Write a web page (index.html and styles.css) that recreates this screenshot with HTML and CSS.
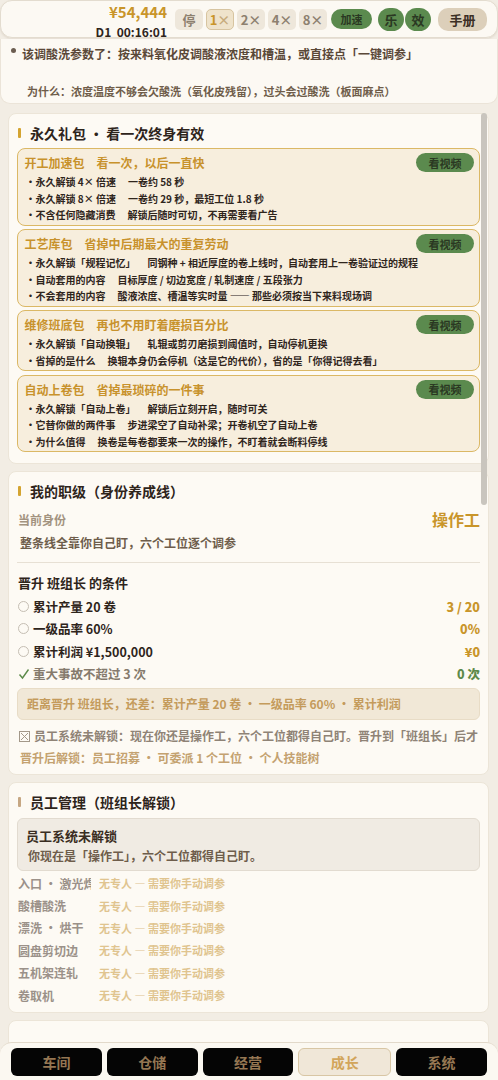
FILE: index.html
```html
<!DOCTYPE html>
<html lang="zh-CN">
<head>
    <meta charset="UTF-8">
    <meta name="viewport" content="width=device-width, initial-scale=1.0">
    <title>冷轧车间 - 成长</title>
    <link rel="stylesheet" href="styles.css">
</head>
<body>
    <!-- Top bar -->
    <header class="topbar">
        <div class="wallet">
            <div class="money">¥54,444</div>
            <div class="clock">D1&nbsp; 00:16:01</div>
        </div>
        <div class="speeds">
            <button class="spd">停</button>
            <button class="spd active"><span class="num">1</span>×</button>
            <button class="spd">2×</button>
            <button class="spd">4×</button>
            <button class="spd">8×</button>
        </div>
        <button class="boost">加速</button>
        <div class="toggles">
            <button class="round">乐</button>
            <button class="round">效</button>
        </div>
        <button class="manual">手册</button>
    </header>

    <!-- Hint -->
    <section class="hint">
        <p class="hint-main"><i class="dot"></i>该调酸洗参数了：按来料氧化皮调酸液浓度和槽温，或直接点「一键调参」</p>
        <p class="hint-why">为什么：浓度温度不够会欠酸洗（氧化皮残留），过头会过酸洗（板面麻点）</p>
    </section>

    <!-- Packs -->
    <section class="card packs">
        <h3 class="card-title">永久礼包 · 看一次终身有效</h3>

        <div class="pack">
            <div class="pack-head">
                <div class="pack-name">开工加速包<span>看一次，以后一直快</span></div>
                <button class="watch">看视频</button>
            </div>
            <ul>
                <li>永久解锁 4× 倍速<em>一卷约 58 秒</em></li>
                <li>永久解锁 8× 倍速<em>一卷约 29 秒，最短工位 1.8 秒</em></li>
                <li>不含任何隐藏消费<em>解锁后随时可切，不再需要看广告</em></li>
            </ul>
        </div>

        <div class="pack">
            <div class="pack-head">
                <div class="pack-name">工艺库包<span>省掉中后期最大的重复劳动</span></div>
                <button class="watch">看视频</button>
            </div>
            <ul>
                <li>永久解锁「规程记忆」<em>同钢种 + 相近厚度的卷上线时，自动套用上一卷验证过的规程</em></li>
                <li>自动套用的内容<em>目标厚度 / 切边宽度 / 轧制速度 / 五段张力</em></li>
                <li>不会套用的内容<em>酸液浓度、槽温等实时量 —— 那些必须按当下来料现场调</em></li>
            </ul>
        </div>

        <div class="pack">
            <div class="pack-head">
                <div class="pack-name">维修班底包<span>再也不用盯着磨损百分比</span></div>
                <button class="watch">看视频</button>
            </div>
            <ul>
                <li>永久解锁「自动换辊」<em>轧辊或剪刃磨损到阈值时，自动停机更换</em></li>
                <li>省掉的是什么<em>换辊本身仍会停机（这是它的代价），省的是「你得记得去看」</em></li>
            </ul>
        </div>

        <div class="pack">
            <div class="pack-head">
                <div class="pack-name">自动上卷包<span>省掉最琐碎的一件事</span></div>
                <button class="watch">看视频</button>
            </div>
            <ul>
                <li>永久解锁「自动上卷」<em>解锁后立刻开启，随时可关</em></li>
                <li>它替你做的两件事<em>步进梁空了自动补梁；开卷机空了自动上卷</em></li>
                <li>为什么值得<em>换卷是每卷都要来一次的操作，不盯着就会断料停线</em></li>
            </ul>
        </div>
    </section>

    <!-- Rank -->
    <section class="card rank">
        <h3 class="card-title">我的职级（身份养成线）</h3>
        <div class="rank-now">
            <span class="label">当前身份</span>
            <span class="rank-name">操作工</span>
        </div>
        <p class="rank-desc">整条线全靠你自己盯，六个工位逐个调参</p>
        <div class="divider"></div>
        <h4 class="cond-title">晋升 班组长 的条件</h4>
        <ul class="conds">
            <li><i class="ring"></i><span>累计产量 20 卷</span><b class="cond-val">3 / 20</b></li>
            <li><i class="ring"></i><span>一级品率 60%</span><b class="cond-val">0%</b></li>
            <li><i class="ring"></i><span>累计利润 ¥1,500,000</span><b class="cond-val">¥0</b></li>
            <li class="done">
                <svg class="tick" viewBox="0 0 12 12" width="12" height="12"><polyline points="1.5,6.5 4.5,10 10.5,1.5" fill="none" stroke="#5d8a4a" stroke-width="1.4"/></svg>
                <span>重大事故不超过 3 次</span><b class="cond-val">0 次</b>
            </li>
        </ul>
        <div class="gap-box">距离晋升 班组长，还差：累计产量 20 卷 · 一级品率 60% · 累计利润</div>
        <p class="locked">
            <svg class="xbox" viewBox="0 0 11 11" width="11" height="11"><rect x="0.5" y="0.5" width="10" height="10" fill="none" stroke="#a39889"/><path d="M2 2 L9 9 M9 2 L2 9" stroke="#a39889"/></svg>员工系统未解锁：现在你还是操作工，六个工位都得自己盯。晋升到「班组长」后才
        </p>
        <p class="unlocks">晋升后解锁：员工招募 · 可委派 1 个工位 · 个人技能树</p>
    </section>

    <!-- Staff -->
    <section class="card staff">
        <h3 class="card-title muted">员工管理（班组长解锁）</h3>
        <div class="staff-box">
            <p class="staff-head">员工系统未解锁</p>
            <p class="staff-sub">你现在是「操作工」，六个工位都得自己盯。</p>
        </div>
        <ul class="stations">
            <li><span class="st-name">入口 · 激光焊</span><span class="st-val">无专人 — 需要你手动调参</span></li>
            <li><span class="st-name">酸槽酸洗</span><span class="st-val">无专人 — 需要你手动调参</span></li>
            <li><span class="st-name">漂洗 · 烘干</span><span class="st-val">无专人 — 需要你手动调参</span></li>
            <li><span class="st-name">圆盘剪切边</span><span class="st-val">无专人 — 需要你手动调参</span></li>
            <li><span class="st-name">五机架连轧</span><span class="st-val">无专人 — 需要你手动调参</span></li>
            <li><span class="st-name">卷取机</span><span class="st-val">无专人 — 需要你手动调参</span></li>
        </ul>
    </section>

    <section class="card next"></section>

    <div class="scroll-thumb"></div>

    <!-- Bottom nav -->
    <nav class="tabs">
        <button class="tab">车间</button>
        <button class="tab">仓储</button>
        <button class="tab">经营</button>
        <button class="tab active">成长</button>
        <button class="tab">系统</button>
    </nav>
</body>
</html>
```

FILE: styles.css
```css
* {
    box-sizing: border-box;
}
html, body {
    margin: 0;
    height: 100%;
    overflow: hidden;
}
body {
    background-color: #f2ede4;
    font-family: "Noto Sans CJK SC", "Noto Sans", sans-serif;
    font-weight: 700;
    color: #3a2d22;
}
button {
    font-family: inherit;
    font-weight: 700;
    border: 0;
    padding: 0;
    cursor: pointer;
}
p, h3, h4, ul {
    margin: 0;
    padding: 0;
}
ul {
    list-style: none;
}

/* Top bar */
.topbar {
    height: 38px;
    display: flex;
    align-items: center;
    justify-content: flex-end;
    padding-right: 10px;
    background: #fcf9f3;
    border: 1px solid #e3dccf;
    border-radius: 12px;
    box-shadow: 0 1px 2px rgba(120, 100, 70, 0.12);
}
.wallet {
    align-self: flex-start;
    text-align: right;
    margin-right: 8px;
    padding-top: 2px;
}
.money {
    font-size: 15px;
    line-height: 18px;
    color: #c9952a;
}
.clock {
    margin-top: 3px;
    font-size: 12px;
    line-height: 16px;
    color: #2e241b;
}
.speeds {
    display: flex;
    gap: 3px;
}
.spd {
    width: 28px;
    height: 21px;
    border-radius: 5px;
    background: #eee7db;
    color: #8d806f;
    font-size: 13px;
}
.spd.active {
    background: #efe3cb;
    border: 1px solid #d7c4a0;
    color: #c7ab7b;
}
.spd .num {
    color: #c9952a;
}
.boost {
    margin-left: 4px;
    width: 41px;
    height: 20px;
    border-radius: 10px;
    background: #5b8a4e;
    color: #2a3822;
    font-size: 11px;
}
.toggles {
    display: flex;
    gap: 1px;
    margin-left: 6px;
}
.round {
    width: 26px;
    height: 23px;
    border-radius: 12px;
    background: #5b8a4e;
    color: #2a3822;
    font-size: 13px;
}
.manual {
    margin-left: 7px;
    width: 49px;
    height: 23px;
    border-radius: 10px;
    background: #dccfba;
    color: #3b2f25;
    font-size: 13px;
}

/* Hint strip */
.hint {
    margin-top: 1px;
    height: 65px;
    padding: 6px 10px 0;
    background: #fcf9f3;
    border: 1px solid #ebe4d8;
    border-top: 0;
    border-radius: 0 0 10px 10px;
}
.hint-main {
    display: flex;
    align-items: center;
    font-size: 12px;
    line-height: 18px;
    color: #5a4838;
    white-space: nowrap;
}
.dot {
    width: 5px;
    height: 5px;
    border-radius: 50%;
    background: #6b5d50;
    margin: -7px 6px 0 0;
}
.hint-why {
    margin-top: 20px;
    padding-left: 16px;
    font-size: 11px;
    line-height: 16px;
    color: #6f5d4a;
    white-space: nowrap;
}

/* Cards */
.card {
    margin: 0 9px 7px 8px;
    background: #fdfaf4;
    border: 1px solid #ece5d8;
    border-radius: 8px;
    padding: 9px 8px 6px;
}
.packs {
    margin-top: 9px;
    padding-bottom: 11px;
}
.card-title {
    display: flex;
    align-items: center;
    height: 20px;
    padding-left: 1px;
    font-size: 14px;
    line-height: 20px;
    color: #2e241b;
}
.card-title::before {
    content: "";
    width: 3px;
    height: 10px;
    margin-right: 9px;
    border-radius: 1px;
    background: #d4a431;
}
.card-title.muted::before {
    background: #c6a783;
}

/* Packs */
.pack {
    margin-top: 5px;
    background: #f7eedd;
    border: 1.5px solid #dbb865;
    border-radius: 8px;
    padding: 5px 5px 1px 6.5px;
}
.pack + .pack {
    margin-top: 3.5px;
}
.pack-head {
    display: flex;
    align-items: center;
    justify-content: space-between;
    height: 17px;
}
.pack-name {
    font-size: 12px;
    line-height: 17px;
    color: #c8922c;
}
.pack-name span {
    margin-left: 12px;
}
.watch {
    width: 58px;
    height: 19px;
    border-radius: 10px;
    background: #5b8a4e;
    color: #2a3822;
    font-size: 11px;
}
.pack ul {
    margin-top: 3px;
}
.pack li {
    font-size: 10px;
    line-height: 16.5px;
    color: #2f251c;
    white-space: nowrap;
}
.pack li::before {
    content: "•";
    display: inline-block;
    width: 10px;
    padding-left: 1px;
}
.pack li em {
    font-style: normal;
    margin-left: 12px;
}

/* Rank */
.rank-now {
    display: flex;
    align-items: center;
    justify-content: space-between;
    height: 22px;
    margin-top: 7px;
    padding-left: 1px;
}
.label {
    font-size: 12px;
    color: #a39380;
}
.rank-name {
    font-size: 16px;
    color: #c9952a;
}
.rank-desc {
    margin-top: 3px;
    padding-left: 3px;
    font-size: 12px;
    line-height: 20px;
    color: #6e5d4b;
}
.divider {
    margin-top: 9px;
    height: 1px;
    background: #e7e0d4;
}
.cond-title {
    margin-top: 10px;
    padding-left: 1px;
    font-size: 13px;
    line-height: 20px;
    color: #2e241b;
}
.conds {
    margin-top: 2px;
}
.conds li {
    display: flex;
    align-items: center;
    height: 22.5px;
    padding-left: 1px;
    font-size: 12.5px;
    color: #2e241b;
}
.ring {
    width: 11px;
    height: 11px;
    border: 1.3px solid #c5beb3;
    border-radius: 50%;
    margin-right: 4px;
}
.tick {
    margin-right: 3px;
}
.conds li.done span {
    color: #857a6d;
}
.cond-val {
    margin-left: auto;
    color: #c9952a;
}
.done .cond-val {
    color: #5d8a4a;
}
.gap-box {
    margin-top: 3px;
    height: 32px;
    padding-left: 9px;
    line-height: 30px;
    font-size: 12px;
    color: #c49b5c;
    background: #f1e8d7;
    border: 1px solid #e8dcc6;
    border-radius: 6px;
    white-space: nowrap;
}
.locked {
    display: flex;
    align-items: center;
    margin-top: 6px;
    padding-left: 2px;
    font-size: 12px;
    line-height: 20px;
    color: #8f8376;
    white-space: nowrap;
    overflow: hidden;
}
.xbox {
    flex: none;
    margin-right: 4px;
}
.unlocks {
    margin-top: 2px;
    padding-left: 3px;
    font-size: 12px;
    line-height: 20px;
    color: #c4a270;
}

/* Staff */
.staff-box {
    margin-top: 6px;
    padding: 7px 8px 4px;
    background: #f0ebe3;
    border: 1px solid #e2dbd0;
    border-radius: 6px;
}
.staff-head {
    font-size: 13px;
    line-height: 20px;
    color: #3a2d22;
}
.staff-sub {
    padding-left: 2px;
    font-size: 12px;
    line-height: 20px;
    color: #6e5d4b;
}
.stations {
    margin-top: 1px;
}
.stations li {
    display: flex;
    align-items: center;
    height: 22.4px;
    padding-left: 1px;
}
.st-name {
    width: 73px;
    overflow: hidden;
    white-space: nowrap;
    font-size: 12px;
    color: #9b9189;
}
.st-val {
    margin-left: 8px;
    font-size: 11px;
    color: #e0c48f;
}
.next {
    height: 80px;
}

/* Overlay scrollbar */
.scroll-thumb {
    position: fixed;
    top: 113px;
    right: 11px;
    width: 6px;
    height: 392px;
    border-radius: 3px;
    background: #c9c5be;
}

/* Bottom tabs */
.tabs {
    position: fixed;
    left: 0;
    right: 0;
    bottom: 0;
    height: 38px;
    display: flex;
    gap: 5px;
    padding: 5px 11px 0;
    background: #fbf8f1;
    border-top: 1px solid #e2d9ca;
    border-radius: 12px 12px 0 0;
}
.tab {
    flex: 1;
    height: 28px;
    border-radius: 6px;
    background: #050505;
    color: #957753;
    font-size: 14px;
}
.tab.active {
    background: #f0e7d8;
    border: 1px solid #d8c6a4;
    color: #d2a55b;
}
```
